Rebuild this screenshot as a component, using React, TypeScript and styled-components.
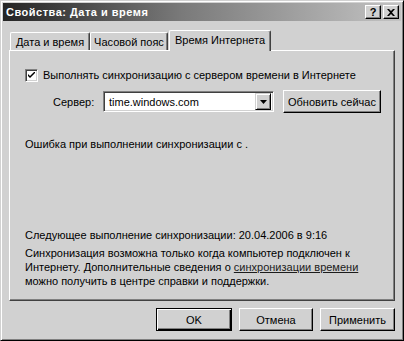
import React from "react";
import styled, { createGlobalStyle } from "styled-components";

const Global = createGlobalStyle`
  html, body { margin: 0; padding: 0; background: #d1d1d1; }
  body { font-family: "Liberation Sans", Arial, sans-serif; font-size: 11px; color: #000; }
  * { box-sizing: border-box; }
`;

const Window = styled.div`
  width: 404px;
  height: 341px;
  background: #d1d1d1;
  border: 1px solid;
  border-color: #d1d1d1 #000 #000 #d1d1d1;
  box-shadow: inset 1px 1px #fff, inset -1px -1px #808080;
  padding: 2px;
  display: flex;
  flex-direction: column;
`;

const TitleBar = styled.div`
  height: 18px;
  background: linear-gradient(to right, #242424 0%, #7a7a7a 45%, #c3c3c3 100%);
  display: flex;
  align-items: center;
  justify-content: space-between;
  padding: 0 2px 0 2px;
`;

const Title = styled.span`
  color: #fff;
  font-weight: bold;
  font-size: 11px;
  letter-spacing: 0.5px;
  padding-left: 1px;
`;

const TitleButtons = styled.div`
  display: flex;
  gap: 2px;
`;

const CaptionButton = styled.div`
  width: 16px;
  height: 14px;
  background: #d1d1d1;
  border: 1px solid;
  border-color: #fff #000 #000 #fff;
  box-shadow: inset -1px -1px #808080;
  display: flex;
  align-items: center;
  justify-content: center;
  font-weight: bold;
  font-size: 11px;
  line-height: 1;
`;

const Body = styled.div`
  flex: 1;
  display: flex;
  flex-direction: column;
  padding: 9px 6px 0 6px;
`;

const TabRow = styled.div`
  display: flex;
  align-items: flex-end;
  padding-left: 1px;
  height: 20px;
`;

const Tab = styled.div<{ $w: number; $active?: boolean }>`
  width: ${(p) => p.$w}px;
  height: ${(p) => (p.$active ? 21 : 18)}px;
  margin-bottom: ${(p) => (p.$active ? -1 : 0)}px;
  margin-left: ${(p) => (p.$active ? 1 : 0)}px;
  position: relative;
  z-index: ${(p) => (p.$active ? 2 : 1)};
  background: #d1d1d1;
  border-top: 1px solid #fff;
  border-left: 1px solid #fff;
  border-right: 1px solid #404040;
  border-top-left-radius: 2px;
  border-top-right-radius: 2px;
  box-shadow: inset -1px 0 #808080;
  display: flex;
  align-items: ${(p) => (p.$active ? "flex-start" : "center")};
  padding-top: ${(p) => (p.$active ? 3 : 0)}px;
  justify-content: center;
  white-space: nowrap;
  font-size: 11px;
`;

const Panel = styled.div`
  height: 251px;
  border: 1px solid;
  border-color: #fff #404040 #404040 #fff;
  box-shadow: inset -1px -1px #808080;
  display: flex;
  flex-direction: column;
  padding: 0 0 12px 15px;
`;

const CheckRow = styled.div`
  margin-top: 17px;
  height: 14px;
  display: flex;
  align-items: center;
  gap: 5px;
`;

const CheckBox = styled.div`
  width: 13px;
  height: 13px;
  background: #fff;
  border: 1px solid;
  border-color: #808080 #fff #fff #808080;
  box-shadow: inset 1px 1px #404040, inset -1px -1px #d1d1d1;
  display: flex;
  align-items: center;
  justify-content: center;
`;

const ServerRow = styled.div`
  margin-top: 8px;
  margin-left: 28px;
  height: 23px;
  display: flex;
  align-items: center;
`;

const Label = styled.span`
  width: 50px;
`;

const Combo = styled.div`
  width: 171px;
  height: 21px;
  background: #fff;
  border: 1px solid;
  border-color: #808080 #fff #fff #808080;
  box-shadow: inset 1px 1px #404040, inset -1px -1px #d1d1d1;
  display: flex;
  align-items: center;
  justify-content: space-between;
  padding: 2px 2px 2px 5px;
`;

const DropButton = styled.div`
  width: 16px;
  height: 17px;
  background: #d1d1d1;
  border: 1px solid;
  border-color: #d1d1d1 #000 #000 #d1d1d1;
  box-shadow: inset 1px 1px #fff, inset -1px -1px #808080;
  display: flex;
  align-items: center;
  justify-content: center;
`;

const Button = styled.div<{ $w: number; $default?: boolean; $ml?: number }>`
  width: ${(p) => p.$w}px;
  height: 23px;
  margin-left: ${(p) => p.$ml ?? 0}px;
  background: #d1d1d1;
  border: 1px solid;
  border-color: ${(p) => (p.$default ? "#000" : "#fff #000 #000 #fff")};
  box-shadow: ${(p) =>
    p.$default
      ? "inset 1px 1px #fff, inset -1px -1px #000, inset -2px -2px #808080"
      : "inset -1px -1px #808080"};
  display: flex;
  align-items: center;
  justify-content: center;
  font-size: 11px;
  font-weight: normal;
  white-space: nowrap;
`;

const Line = styled.div<{ $mt?: number }>`
  margin-top: ${(p) => p.$mt ?? 0}px;
  line-height: 14px;
  white-space: nowrap;
`;

const Bottom = styled.div`
  margin-top: auto;
  display: flex;
  flex-direction: column;
`;

const Paragraph = styled.p`
  margin: 4px 0 0 0;
  line-height: 14px;
`;

const Link = styled.span`
  text-decoration: underline;
  color: #1c1c1c;
`;

const ButtonRow = styled.div`
  margin-top: 7px;
  display: flex;
  justify-content: flex-end;
  gap: 7px;
`;

export default function App() {
  return (
    <>
      <Global />
      <Window>
        <TitleBar>
          <Title>Свойства: Дата и время</Title>
          <TitleButtons>
            <CaptionButton>?</CaptionButton>
            <CaptionButton>
              <svg width="8" height="7" viewBox="0 0 8 7">
                <path d="M0 0 L2 0 L4 2 L6 0 L8 0 L5 3.5 L8 7 L6 7 L4 5 L2 7 L0 7 L3 3.5 Z" fill="#000" />
              </svg>
            </CaptionButton>
          </TitleButtons>
        </TitleBar>
        <Body>
          <TabRow>
            <Tab $w={80}>Дата и время</Tab>
            <Tab $w={78}>Часовой пояс</Tab>
            <Tab $w={102} $active>Время Интернета</Tab>
          </TabRow>
          <Panel>
            <CheckRow>
              <CheckBox>
                <svg width="7" height="7" viewBox="0 0 7 7">
                  <path d="M0 2 L0 4 L2 6 L7 1 L7 -1 L2 4 Z" fill="#000" />
                </svg>
              </CheckBox>
              <span>Выполнять синхронизацию с сервером времени в Интернете</span>
            </CheckRow>
            <ServerRow>
              <Label>Сервер:</Label>
              <Combo>
                <span>time.windows.com</span>
                <DropButton>
                  <svg width="7" height="4" viewBox="0 0 7 4">
                    <path d="M0 0 L7 0 L3.5 4 Z" fill="#000" />
                  </svg>
                </DropButton>
              </Combo>
              <Button $w={98} $ml={9}>Обновить сейчас</Button>
            </ServerRow>
            <Line $mt={24}>Ошибка при выполнении синхронизации с .</Line>
            <Bottom>
              <Line>Следующее выполнение синхронизации: 20.04.2006 в 9:16</Line>
              <Paragraph>
                Синхронизация возможна только когда компьютер подключен к
                <br />
                Интернету. Дополнительные сведения о <Link>синхронизации времени</Link>
                <br />
                можно получить в центре справки и поддержки.
              </Paragraph>
            </Bottom>
          </Panel>
          <ButtonRow>
            <Button $w={76} $default>OK</Button>
            <Button $w={74}>Отмена</Button>
            <Button $w={75}>Применить</Button>
          </ButtonRow>
        </Body>
      </Window>
    </>
  );
}
